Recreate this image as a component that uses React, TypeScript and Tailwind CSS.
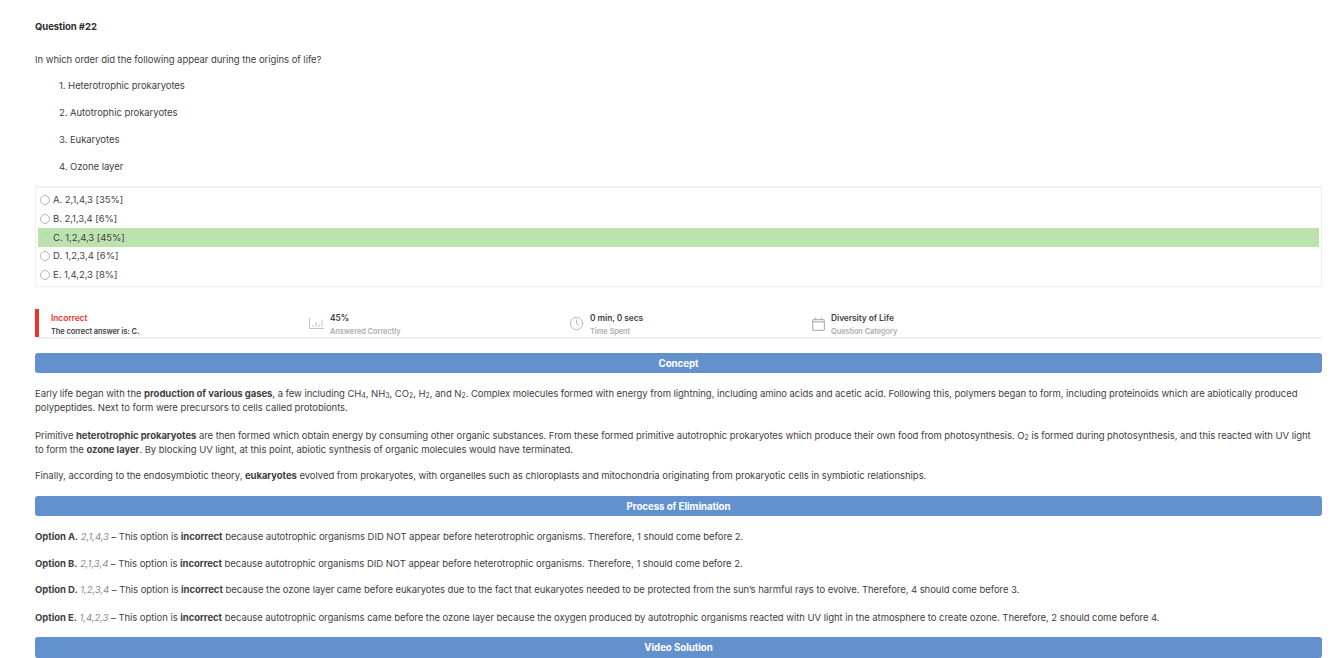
import { Clock } from 'lucide-react';

const listItems = ['1. Heterotrophic prokaryotes', '2. Autotrophic prokaryotes', '3. Eukaryotes', '4. Ozone layer'];

const options = [
  { label: 'A. 2,1,4,3 [35%]' },
  { label: 'B. 2,1,3,4 [6%]' },
  { label: 'C. 1,2,4,3 [45%]', correct: true },
  { label: 'D. 1,2,3,4 [6%]' },
  { label: 'E. 1,4,2,3 [8%]' },
];

const eliminations = [
  { name: 'Option A.', order: '2,1,4,3', rest: ' because autotrophic organisms DID NOT appear before heterotrophic organisms. Therefore, 1 should come before 2.', cls: 'mt-[14px]' },
  { name: 'Option B.', order: '2,1,3,4', rest: ' because autotrophic organisms DID NOT appear before heterotrophic organisms. Therefore, 1 should come before 2.', cls: 'mt-[13px]' },
  { name: 'Option D.', order: '1,2,3,4', rest: ' because the ozone layer came before eukaryotes due to the fact that eukaryotes needed to be protected from the sun’s harmful rays to evolve. Therefore, 4 should come before 3.', cls: 'mt-[12px]' },
  { name: 'Option E.', order: '1,4,2,3', rest: ' because autotrophic organisms came before the ozone layer because the oxygen produced by autotrophic organisms reacted with UV light in the atmosphere to create ozone. Therefore, 2 should come before 4.', cls: 'mt-[14px]' },
];

const Bar = ({ title }: { title: string }) => (
  <div className="h-[20.5px] rounded-[3px] bg-[#6291ce] text-center text-[9.7px] leading-[21px] font-bold text-white">{title}</div>
);

const Sub = ({ children }: { children: string }) => <sub className="text-[7px] leading-none">{children}</sub>;

export default function App() {
  return (
    <div className="h-[658px] overflow-hidden bg-white pt-[20px] pr-[12px] pl-[35px] font-['Inter',sans-serif] text-[9.5px] tracking-[-0.05px] text-[#3f4144]">
      <div className="h-[14px] leading-[14px] font-bold text-[#2b2d30]">Question #22</div>
      <p className="mt-[19px] leading-[14px]">In which order did the following appear during the origins of life?</p>

      {/* numbered items */}
      <div className="mt-[12px] flex flex-col gap-[13px] pl-[24px]">
        {listItems.map((item) => (
          <div key={item} className="h-[14px] leading-[14px]">{item}</div>
        ))}
      </div>

      {/* answer choices */}
      <div className="mt-[12px] h-[101px] border border-t-2 border-[#f0f0f0] px-[2px] pt-[3px]">
        {options.map((o) => (
          <div key={o.label} className={`flex h-[18.7px] items-center gap-[3px] ${o.correct ? 'bg-[#bce3ad]' : ''}`}>
            <span className={`ml-[2px] h-[10px] w-[10px] rounded-full border ${o.correct ? 'border-[#b6dca8]' : 'border-[#b5b5b5]'}`} />
            <span className="leading-[14px]">{o.label}</span>
          </div>
        ))}
      </div>

      {/* result stats */}
      <div className="mt-[22px] flex h-[30px] border-b-2 border-[#f0f0f0] text-[8.4px]">
        <div className="w-[274px] border-l-[4px] border-[#ef3325] pl-[12px]">
          <div className="mt-[4px] leading-[11px] font-semibold text-[#f0352b]">Incorrect</div>
          <div className="mt-[2px] text-[7.4px] leading-[11px] font-semibold text-[#3f4144]">The correct answer is: C.</div>
        </div>
        <div className="flex w-[260px] gap-[6px]">
          <svg className="mt-[9px] h-[11px] w-[15px]" viewBox="0 0 15 11" fill="none" stroke="#c4c4c4" strokeWidth="1">
            <path d="M.5 0v10.5H15M4 9V7M7 9V4M10 9V6M13 9V2" />
          </svg>
          <div>
            <div className="mt-[4px] leading-[11px] font-semibold text-[#3f4144]">45%</div>
            <div className="mt-[2px] text-[7.4px] leading-[11px] font-semibold text-[#aeaeae]">Answered Correctly</div>
          </div>
        </div>
        <div className="flex w-[243px] gap-[6px]">
          <Clock className="mt-[7px] h-[15px] w-[15px]" stroke="#b5b5b5" strokeWidth={1.5} />
          <div>
            <div className="mt-[4px] leading-[11px] font-semibold text-[#3f4144]">0 min, 0 secs</div>
            <div className="mt-[2px] text-[7.4px] leading-[11px] font-semibold text-[#aeaeae]">Time Spent</div>
          </div>
        </div>
        <div className="flex gap-[6px]">
          <svg className="mt-[8px] h-[14px] w-[13px]" viewBox="0 0 13 14" fill="none" stroke="#b5b5b5" strokeWidth="1.2">
            <rect x=".6" y="2.6" width="11.8" height="10.8" rx="1" />
            <path d="M.6 4.8h11.8M3.5 .5v2M9.5 .5v2" />
          </svg>
          <div>
            <div className="mt-[4px] leading-[11px] font-semibold text-[#3f4144]">Diversity of Life</div>
            <div className="mt-[2px] text-[7.4px] leading-[11px] font-semibold text-[#aeaeae]">Question Category</div>
          </div>
        </div>
      </div>

      <div className="mt-[13.5px]"><Bar title="Concept" /></div>

      <p className="mt-[13.5px] leading-[14px]">
        Early life began with the <b>production of various gases</b>, a few including CH<Sub>4</Sub>, NH<Sub>3</Sub>, CO<Sub>2</Sub>, H<Sub>2</Sub>, and N<Sub>2</Sub>. Complex molecules formed with energy from lightning, including amino acids and acetic acid. Following this, polymers began to form, including proteinoids which are abiotically produced polypeptides. Next to form were precursors to cells called protobionts.
      </p>
      <p className="mt-[14px] leading-[14px]">
        Primitive <b>heterotrophic prokaryotes</b> are then formed which obtain energy by consuming other organic substances. From these formed primitive autotrophic prokaryotes which produce their own food from photosynthesis. O<Sub>2</Sub> is formed during photosynthesis, and this reacted with UV light<br />to form the <b>ozone layer</b>. By blocking UV light, at this point, abiotic synthesis of organic molecules would have terminated.
      </p>
      <p className="mt-[12px] leading-[14px]">
        Finally, according to the endosymbiotic theory, <b>eukaryotes</b> evolved from prokaryotes, with organelles such as chloroplasts and mitochondria originating from prokaryotic cells in symbiotic relationships.
      </p>

      <div className="mt-[13px]"><Bar title="Process of Elimination" /></div>

      {eliminations.map((e) => (
        <p key={e.name} className={`${e.cls} leading-[14px]`}>
          <b>{e.name}</b> <i className="text-[#8a8a8a]">{e.order}</i> – This option is <b>incorrect</b>{e.rest}
        </p>
      ))}

      <div className="mt-[12px]"><Bar title="Video Solution" /></div>
    </div>
  );
}
